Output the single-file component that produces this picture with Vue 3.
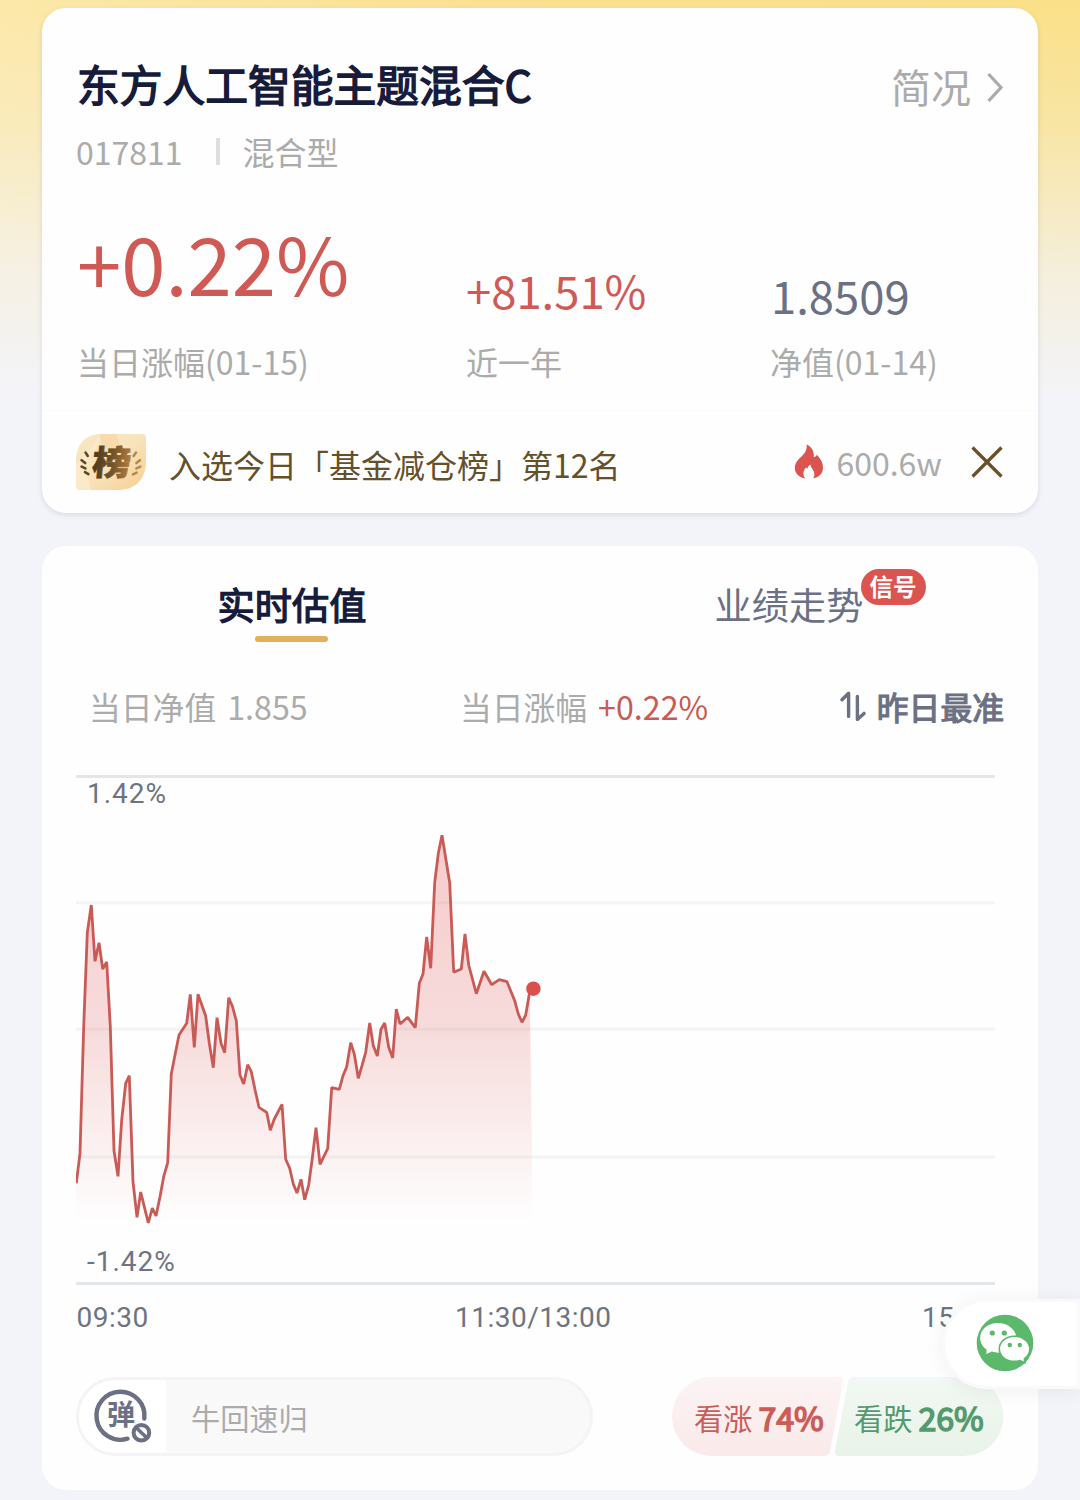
<template>
  <div class="page">
    <section class="card summary">
      <div class="summary__head">
        <h1 class="summary__title">东方人工智能主题混合C</h1>
        <a class="summary__more">
          <span>简况</span>
          <svg width="18" height="32" viewBox="0 0 18 32">
            <path d="M2.5 4 L15 17.5 L2.5 31" fill="none" stroke="#ababab" stroke-width="3.2" />
          </svg>
        </a>
      </div>
      <div class="summary__meta">
        <span>017811</span>
        <i class="summary__divider"></i>
        <span>混合型</span>
      </div>

      <div class="stats">
        <div v-for="s in stats" :key="s.label" class="stat" :class="`stat--${s.kind}`">
          <div class="stat__value">{{ s.value }}</div>
          <div class="stat__label">{{ s.label }}</div>
        </div>
      </div>

      <div class="rank">
        <svg class="rank__badge" width="70" height="56" viewBox="0 0 70 56">
          <defs>
            <linearGradient id="badgeBg" x1="0" y1="0" x2="1" y2="1">
              <stop offset="0" stop-color="#f9e7c4" />
              <stop offset="0.5" stop-color="#f8e3bb" />
              <stop offset="1" stop-color="#f5cf92" />
            </linearGradient>
            <linearGradient id="badgeInk" x1="0" y1="0" x2="1" y2="0">
              <stop offset="0" stop-color="#4c391d" />
              <stop offset="0.5" stop-color="#715229" />
              <stop offset="1" stop-color="#b27d3c" />
            </linearGradient>
            <clipPath id="badgeClip">
              <path d="M23 0H66Q70 0 70 4V30Q68 54 44 56H4Q0 56 0 52V24Q2 2 23 0Z" />
            </clipPath>
          </defs>
          <g clip-path="url(#badgeClip)">
            <rect width="70" height="56" fill="url(#badgeBg)" />
            <path d="M24 0 Q24 18 6 30 Q12 42 15 56 H0 V30 Q14 20 24 0Z" fill="#fbeed2" opacity="0.6" />
            <path d="M23 0H40Q46 10 40 22Q28 18 23 0Z" fill="#f6d7a2" opacity="0.7" />
          </g>
          <g fill="none" stroke-width="2.6" stroke-linecap="round">
            <path d="M9.6 18.6L11.8 22M5.6 26.2L9.2 29M5.6 32.6L9.4 34.4M9 38.2L12.4 40.2" stroke="#5d4725" />
            <path d="M60 18.6L57.6 22M64 26.2L60.4 29M64.4 32.6L60.4 34.4M60.6 38.6L57 40.4" stroke="#b68a4f" />
          </g>
          <text
            class="rank__glyph"
            transform="translate(15.5 41) skewX(-5) scale(1.04 0.92)"
            fill="url(#badgeInk)"
            stroke="url(#badgeInk)"
          >榜</text>
        </svg>
        <span class="rank__text">入选今日「基金减仓榜」第12名</span>
        <svg class="rank__fire" width="30" height="36" viewBox="0 0 30 36">
          <path
            d="M12.8 0.6C18 3.2 20.4 8 19.8 13.2C21.6 12.8 22.4 11.8 22.8 10.8C27 14.8 29.2 19.6 29 24C28.8 29.6 25.4 33 19.4 34.4C21 31.4 20.6 28 18.4 25C17.4 23.6 16.8 22.4 16.4 20.4C14.8 21.4 13.8 22.8 13.4 24.6C12.8 24.4 12.4 24 12 23.4C8.8 26.8 8.6 31 11.4 34.6C5.2 33.6 1 29.6 0.8 24C0.8 18.4 4.4 15.4 8 12C11.4 8.8 13.2 5.4 12.8 0.6Z"
            fill="#dc5450"
          />
        </svg>
        <span class="rank__heat">600.6w</span>
        <svg class="rank__close" width="32" height="32" viewBox="0 0 32 32">
          <path d="M1.5 1.5L30.5 30.5M30.5 1.5L1.5 30.5" stroke="#6a5027" stroke-width="3.2" />
        </svg>
      </div>
    </section>

    <section class="card trend">
      <div class="tabs">
        <div class="tab tab--active">实时估值</div>
        <div class="tab">
          <span class="tab__label">业绩走势<em class="tab__badge">信号</em></span>
        </div>
      </div>

      <div class="quote">
        <span class="quote__nav">当日净值<b>1.855</b></span>
        <span class="quote__change">当日涨幅<b class="up">+0.22%</b></span>
        <span class="quote__best">
          <svg width="27" height="32" viewBox="0 0 27 32">
            <path
              d="M2 9.8L8.6 3.2V26.4M17.4 6.4V29.4L24 23.4"
              fill="none"
              stroke="#6b7183"
              stroke-width="3.4"
              stroke-linecap="round"
              stroke-linejoin="round"
            />
          </svg>
          昨日最准
        </span>
      </div>

      <svg class="chart" width="919" height="570" viewBox="0 0 919 570">
        <defs>
          <linearGradient id="areaFill" gradientUnits="userSpaceOnUse" x1="0" y1="65" x2="0" y2="453">
            <stop offset="0" stop-color="#e05050" stop-opacity="0.29" />
            <stop offset="0.5" stop-color="#dc5050" stop-opacity="0.2" />
            <stop offset="1" stop-color="#e05050" stop-opacity="0" />
          </linearGradient>
        </defs>
        <line
          v-for="g in gridLines"
          :key="g.y"
          x1="0"
          x2="919"
          :y1="g.y"
          :y2="g.y"
          :stroke="g.edge ? '#e4e7e9' : '#f3f4f5'"
          stroke-width="3"
        />
        <path :d="areaPath" fill="url(#areaFill)" />
        <polyline :points="linePoints" fill="none" stroke="#c95a55" stroke-width="2.8" stroke-linejoin="bevel" />
        <circle cx="457.4" cy="218.7" r="7.2" fill="#da504d" />
        <g class="chart__text">
          <text x="11" y="33">1.42%</text>
          <text x="11" y="501">-1.42%</text>
        </g>
        <g class="chart__text chart__text--time">
          <text x="0.5" y="557">09:30</text>
          <text x="379" y="557">11:30/13:00</text>
          <text x="846" y="557">15:00</text>
        </g>
      </svg>

      <div class="actions">
        <div class="danmu">
          <div class="danmu__toggle">
            <svg width="60" height="60" viewBox="0 0 60 60">
              <g fill="none" stroke="#6b7183">
                <path d="M52.3 31.5A24 24 0 1 0 35.5 51.7" stroke-width="4.4" stroke-linecap="round" />
                <circle cx="49.4" cy="45.7" r="7.8" stroke-width="4" />
                <path d="M44 40.5L55 51" stroke-width="3.6" />
              </g>
              <text class="danmu__glyph" x="15" y="37.8">弹</text>
            </svg>
          </div>
          <span class="danmu__placeholder">牛回速归</span>
        </div>

        <div class="vote">
          <svg class="vote__bg" width="332" height="79" viewBox="0 0 332 79">
            <defs>
              <linearGradient id="voteUp" x1="0" y1="0" x2="0" y2="1">
                <stop offset="0" stop-color="#fcf3f4" />
                <stop offset="1" stop-color="#faeae9" />
              </linearGradient>
              <linearGradient id="voteDown" x1="0" y1="0" x2="0" y2="1">
                <stop offset="0" stop-color="#f2f8f3" />
                <stop offset="1" stop-color="#e8f3e8" />
              </linearGradient>
            </defs>
            <path d="M39.5 0H167Q172 0 171 5L158 74Q157 79 152 79H39.5A39.5 39.5 0 0 1 39.5 0Z" fill="url(#voteUp)" />
            <path d="M182 0H292A39.5 39.5 0 0 1 292 79H167Q162 79 163 74L176 5Q177 0 182 0Z" fill="url(#voteDown)" />
          </svg>
          <span class="vote__item vote__item--up">看涨<b>74%</b></span>
          <span class="vote__item vote__item--down">看跌<b>26%</b></span>
        </div>
      </div>
    </section>

    <div class="wechat">
      <svg width="58" height="58" viewBox="0 0 58 58">
        <circle cx="29" cy="29" r="28.3" fill="#5cb86b" />
        <path
          d="M21.5 9C11.6 9 4.2 15.6 4.2 24C4.2 28.8 6.6 32.8 10.6 35.6L10.4 40L15.8 37.6C18.4 38.4 21 38.8 24 38.6L40 21C37.8 13.6 30.4 9 21.5 9Z"
          fill="#fff"
        />
        <path
          d="M38.3 22.2C29.8 22.2 23.3 28 23.3 35C23.3 42 29.8 47.4 38.3 47.4C40.4 47.4 42.4 47.2 44.2 46.6L48.8 48.8L48.4 44.8C51.6 42.4 53.8 39 53.8 35C53.8 28 46.8 22.2 38.3 22.2Z"
          fill="#fff"
          stroke="#5cb86b"
          stroke-width="1.6"
        />
        <g fill="#5cb86b">
          <circle cx="16.3" cy="19" r="2.6" />
          <circle cx="28.3" cy="19" r="2.6" />
          <circle cx="33.8" cy="31" r="2.2" />
          <circle cx="43.8" cy="31" r="2.2" />
        </g>
      </svg>
    </div>
  </div>
</template>

<script setup>
import { computed } from 'vue'

const stats = [
  { kind: 'today', value: '+0.22%', label: '当日涨幅(01-15)' },
  { kind: 'year', value: '+81.51%', label: '近一年' },
  { kind: 'nav', value: '1.8509', label: '净值(01-14)' },
]

const gridLines = [
  { y: 6.5, edge: true },
  { y: 132.7, edge: false },
  { y: 259.3, edge: false },
  { y: 387, edge: false },
  { y: 513.5, edge: true },
]

// [x, y] in thirds of a pixel
const samples = [
  [49, 1270], [60, 1180], [71, 800], [82, 518], [94, 435], [105, 604], [117, 548], [128, 627],
  [140, 606], [151, 800], [162, 1172], [174, 1249], [185, 1080], [197, 970], [208, 947], [219, 1265],
  [231, 1372], [242, 1296], [254, 1345], [265, 1389], [277, 1344], [288, 1368], [300, 1310], [311, 1250],
  [323, 1208], [334, 942], [345, 885], [357, 825], [380, 790], [391, 703], [403, 862], [414, 703],
  [437, 768], [448, 850], [460, 923], [471, 773], [483, 850], [494, 878], [506, 713], [517, 738],
  [529, 782], [540, 945], [551, 972], [563, 914], [574, 935], [586, 993], [597, 1042], [620, 1057],
  [631, 1111], [643, 1077], [666, 1033], [677, 1198], [689, 1225], [700, 1272], [711, 1299], [723, 1258],
  [734, 1319], [746, 1275], [757, 1195], [768, 1103], [780, 1213], [803, 1166], [815, 983], [838, 988],
  [849, 947], [860, 920], [872, 848], [883, 882], [895, 955], [906, 917], [917, 877], [929, 789],
  [940, 857], [952, 888], [963, 808], [974, 789], [986, 862], [998, 894], [1009, 747], [1020, 792],
  [1043, 772], [1066, 803], [1078, 670], [1089, 642], [1100, 531], [1112, 625], [1124, 368], [1135, 280],
  [1146, 226], [1169, 368], [1181, 637], [1204, 627], [1215, 522], [1226, 615], [1249, 701], [1272, 634],
  [1295, 674], [1318, 659], [1341, 665], [1364, 722], [1375, 762], [1386, 787], [1397, 765], [1409, 695],
]

const linePoints = computed(() =>
  samples.map(([x, y]) => `${((x - 48) / 3).toFixed(1)},${(y / 3 - 10).toFixed(1)}`).join(' ')
)
const areaPath = computed(() => `M0,453 L${linePoints.value} L457,453 Z`)
</script>

<style>
body {
  margin: 0;
  background: #f3f4fa;
}
</style>

<style scoped>
.page {
  position: relative;
  box-sizing: border-box;
  width: 1080px;
  height: 1500px;
  padding: 8px 42px 0;
  overflow: hidden;
  font-family: 'Noto Sans CJK SC', sans-serif;
  background:
    linear-gradient(180deg, rgba(243, 244, 250, 0) 0, rgba(243, 244, 250, 0.24) 120px, rgba(243, 244, 250, 0.72) 270px, #f3f4fa 400px),
    linear-gradient(90deg, #fce8a8 0, #fbe08f 50%, #fae088 100%);
}

.card {
  box-sizing: border-box;
  background: #fefefe;
  border-radius: 24px;
}

/* fund summary */
.summary {
  height: 505px;
  padding-top: 45px;
  box-shadow: 0 2px 5px rgba(60, 60, 90, 0.14);
}

.summary__head {
  display: flex;
  justify-content: space-between;
  height: 60px;
  padding: 0 34px 0 35px;
  line-height: 60px;
}

.summary__title {
  margin: 0;
  font-size: 42.75px;
  font-weight: 400;
  color: #161b3b;
  -webkit-text-stroke: 1.5px #161b3b;
}

.summary__more {
  display: flex;
  align-items: center;
  gap: 15px;
  padding-top: 5px;
  font-size: 40px;
  color: #ababab;
}

.summary__meta {
  display: flex;
  align-items: center;
  height: 40px;
  margin-top: 18px;
  padding-left: 34px;
  font-size: 32px;
  line-height: 40px;
  color: #ababab;
}

.summary__divider {
  width: 4px;
  height: 27px;
  margin: 0 23px 0 33px;
  background: #dedede;
}

.stats {
  display: grid;
  grid-template-columns: 389px 304px 1fr;
  height: 241px;
  padding-left: 35px;
}

.stat {
  display: flex;
  flex-direction: column;
}

.stat__value {
  height: 170px;
  color: #cf5a55;
}

.stat--today .stat__value {
  font-size: 79.7px;
  line-height: 182px;
}

.stat--year .stat__value {
  font-size: 45.4px;
  line-height: 236px;
}

.stat--nav .stat__value {
  padding-left: 1px;
  font-size: 45.4px;
  line-height: 247px;
  color: #6b7183;
}

.stat__label {
  font-size: 32px;
  line-height: 40px;
  color: #ababab;
}

.rank {
  display: flex;
  align-items: center;
  box-sizing: border-box;
  height: 102px;
  margin-top: -2px;
  padding: 0 35px 0 34px;
  border-top: 1px solid #fafafa;
}

.rank__badge {
  overflow: visible;
}

.rank__glyph {
  font-size: 37px;
  font-weight: 900;
  stroke-width: 0.8;
}

.rank__text {
  flex: 1;
  margin-left: 23px;
  padding-top: 5px;
  font-size: 32px;
  color: #65502c;
}

.rank__heat {
  margin: 0 29px 0 12px;
  font-size: 32px;
  color: #ababab;
}

/* intraday trend */
.trend {
  height: 944px;
  margin-top: 33px;
  padding: 32px 34px 0;
}

.tabs {
  display: flex;
  height: 64px;
}

.tab {
  position: relative;
  flex: none;
  width: 432px;
  font-size: 37.2px;
  line-height: 52px;
  text-align: center;
  color: #6b7183;
}

.tab + .tab {
  width: 562px;
}

.tab--active {
  color: #161b3b;
  -webkit-text-stroke: 1.3px #161b3b;
}

.tab--active::after {
  position: absolute;
  bottom: 0;
  left: 179px;
  width: 73px;
  height: 6px;
  border-radius: 3px;
  background: #e0b05c;
  content: '';
}

.tab__label {
  position: relative;
}

.tab__badge {
  position: absolute;
  top: -8px;
  left: 146px;
  width: 65px;
  height: 36px;
  border-radius: 18px;
  background: #dc544f;
  font-size: 23.5px;
  font-style: normal;
  font-weight: 700;
  line-height: 35px;
  color: #fff;
}

.quote {
  display: flex;
  align-items: center;
  height: 48px;
  margin-top: 40px;
  padding-left: 13px;
  font-size: 31.8px;
  line-height: 48px;
  color: #ababab;
}

.quote b {
  margin-left: 11px;
  font-size: 32.2px;
  font-weight: 400;
}

.quote .up {
  color: #c95a55;
}

.quote__nav {
  width: 371px;
}

.quote__change {
  width: 380px;
}

.quote__best {
  display: flex;
  align-items: center;
  gap: 10px;
  color: #6b7183;
  white-space: nowrap;
  -webkit-text-stroke: 1.2px #6b7183;
}

.chart {
  display: block;
  margin-top: 40px;
}

.chart__text {
  font-family: Roboto, sans-serif;
  font-size: 28px;
  letter-spacing: 1px;
  fill: #6e747f;
}

.chart__text--time {
  letter-spacing: 0.5px;
}

.actions {
  display: flex;
  justify-content: space-between;
  height: 79px;
  margin-top: 37px;
}

.danmu {
  display: flex;
  box-sizing: border-box;
  width: 517px;
  overflow: hidden;
  border: 3px solid #f4f4f4;
  border-radius: 40px;
  background: #f9f9f9;
}

.danmu__toggle {
  width: 87px;
  background: #fff;
}

.danmu__toggle svg {
  display: block;
  margin: 7px 0 0 13px;
}

.danmu__glyph {
  font-size: 28px;
  font-weight: 700;
  fill: #6b7183;
}

.danmu__placeholder {
  margin-left: 25px;
  font-size: 29.2px;
  line-height: 75px;
  color: #ababab;
}

.vote {
  position: relative;
  display: flex;
  width: 332px;
  font-size: 29.2px;
  line-height: 81px;
}

.vote__bg {
  position: absolute;
  inset: 0;
}

.vote__item {
  position: relative;
  display: flex;
  box-sizing: border-box;
  width: 160px;
  padding-left: 22px;
  white-space: nowrap;
}

.vote__item b {
  margin-left: 6px;
  font-size: 32.2px;
  font-weight: 400;
}

.vote__item--up {
  color: #cb5c57;
}

.vote__item--up b {
  -webkit-text-stroke: 1.5px #cb5c57;
}

.vote__item--down {
  color: #539a6f;
}

.vote__item--down b {
  -webkit-text-stroke: 1.5px #539a6f;
}

/* floating share button */
.wechat {
  position: absolute;
  top: 1299px;
  right: 0;
  display: flex;
  align-items: center;
  box-sizing: border-box;
  width: 138px;
  height: 90px;
  padding: 0 0 2px 31px;
  border: 3px solid #fafafb;
  border-radius: 45px 0 0 45px;
  background: #fff;
  box-shadow: 0 2px 20px rgba(0, 0, 0, 0.06);
}
</style>
